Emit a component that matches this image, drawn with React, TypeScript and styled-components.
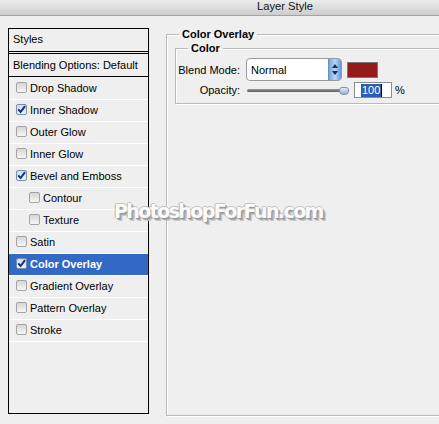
import React from 'react'
import styled, { createGlobalStyle } from 'styled-components'

const GlobalStyle = createGlobalStyle`
    html, body {
        margin: 0;
        padding: 0;
        background: #efefef;
    }
`

const Window = styled.div`
    position: relative;
    width: 439px;
    height: 424px;
    overflow: hidden;
    background: #efefef;
    font-family: 'Liberation Sans', Arial, sans-serif;
    font-size: 11px;
    color: #000;
`

const TitleBar = styled.div`
    height: 15px;
    border-bottom: 1px solid #a2a2a2;
    background: linear-gradient(#ececec, #cdcdcd);
    padding-left: 257px;
    font-size: 11.2px;
    line-height: 13px;
    color: #111;
`

const Body = styled.div`
    display: flex;
    padding: 12px 0 0 8px;
`

const StylesPanel = styled.div`
    flex-shrink: 0;
    width: 139px;
    height: 384px;
    border: 1px solid #000;
    display: flex;
    flex-direction: column;
    white-space: nowrap;
`

const PanelHeader = styled.div`
    height: 22px;
    line-height: 21px;
    padding-left: 4px;
    border-bottom: 3px double #000;
`

const BlendingRow = styled.div`
    height: 22px;
    line-height: 22px;
    padding-left: 4px;
    border-bottom: 1px solid #000;
`

const StyleRow = styled.div<{ $active?: boolean; $indent?: boolean; $first?: boolean }>`
    height: 21px;
    border-top: 1px solid ${(p) => (p.$first ? 'transparent' : '#fff')};
    display: flex;
    align-items: center;
    gap: 3px;
    padding-left: ${(p) => (p.$indent ? 20 : 7)}px;
    padding-bottom: 2px;
    box-sizing: border-box;
    height: 22px;
    background: ${(p) => (p.$active ? '#3169c4' : 'transparent')};
    color: ${(p) => (p.$active ? '#fff' : '#000')};
    font-weight: ${(p) => (p.$active ? 'bold' : 'normal')};
`

const Box = styled.span<{ $checked?: boolean }>`
    width: 9px;
    height: 9px;
    border: 1px solid ${(p) => (p.$checked ? '#7a8fb0' : '#a4a4a4')};
    border-radius: 2px;
    background: ${(p) =>
        p.$checked
            ? 'linear-gradient(#c9dcf4, #eef4fc)'
            : 'linear-gradient(#d6d6d6, #f6f6f6)'};
    display: flex;
    align-items: center;
    justify-content: center;
    flex-shrink: 0;
`

const Checkbox = ({ checked }: { checked?: boolean }) => (
    <Box $checked={checked}>
        {checked && (
            <svg width="9" height="9" viewBox="0 0 9 9">
                <path
                    d="M1.2 4.4 L3.6 7 L8 1.2"
                    fill="none"
                    stroke="#1a2f7a"
                    strokeWidth="2"
                />
            </svg>
        )}
    </Box>
)

const Settings = styled.div`
    margin-left: 17px;
`

const Group = styled.fieldset`
    box-sizing: border-box;
    margin: 0;
    padding: 0 0 0 8px;
    border: 1px solid #b9b9b9;
    box-shadow: inset 1px 1px 0 #fff, 1px 1px 0 #fff;
    width: 300px;
    height: 388px;
`

const InnerGroup = styled.fieldset`
    margin: 1px 0 0 0;
    padding: 3px 0 5px 0;
    border: 1px solid #b9b9b9;
    box-shadow: inset 1px 1px 0 #fff, 1px 1px 0 #fff;
    width: 300px;
    display: flex;
    flex-direction: column;
    gap: 1px;
`

const Legend = styled.legend<{ $offset: number }>`
    margin-left: ${(p) => p.$offset}px;
    padding: 0 3px;
    font-weight: bold;
    font-size: 11px;
    line-height: 13px;
`

const FieldRow = styled.div<{ $height: number }>`
    display: flex;
    align-items: center;
    height: ${(p) => p.$height}px;
`

const Label = styled.span`
    width: 64px;
    text-align: right;
    flex-shrink: 0;
`

const Select = styled.div`
    margin-left: 6px;
    width: 94px;
    height: 21px;
    border: 1px solid #9a9a9a;
    border-radius: 4px;
    background: #fff;
    display: flex;
    align-items: center;
    justify-content: space-between;
    overflow: hidden;
`

const SelectText = styled.span`
    padding-left: 4px;
    font-size: 11px;
`

const Spinner = styled.div`
    width: 12px;
    height: 100%;
    background: linear-gradient(90deg, #6ea6df, #b8d8f6 50%, #5f98d6);
    border-left: 1px solid #6a8fbf;
    display: flex;
    align-items: center;
    justify-content: center;
`

const Swatch = styled.div`
    width: 29px;
    height: 14px;
    border: 1px solid #7a7a7a;
    background: #951a1a;
    margin-left: 5px;
`

const Slider = styled.div`
    position: relative;
    width: 102px;
    height: 14px;
    display: flex;
    align-items: center;
    margin-left: 7px;
`

const Track = styled.div`
    width: 100%;
    height: 3px;
    border-radius: 2px;
    background: linear-gradient(#9a9a9a, #5c5c5c);
`

const Thumb = styled.div`
    position: absolute;
    right: 0;
    top: 4px;
    width: 8px;
    height: 6px;
    border-radius: 3px 3px 4px 4px;
    background: linear-gradient(#e0ecf8, #8fb0d4);
    border: 1px solid #7b93b0;
`

const NumberInput = styled.div`
    width: 30px;
    height: 14px;
    border: 1px solid #8c8c8c;
    background: #fff;
    display: flex;
    align-items: center;
    padding-left: 6px;
    margin-left: 5px;
`

const Selected = styled.span`
    background: #2f5db4;
    color: #fff;
    line-height: 13px;
    padding: 0 1px;
`

const Caret = styled.span`
    width: 1px;
    height: 13px;
    background: #000;
`

const Unit = styled.span`
    margin-left: 3px;
`

const Watermark = styled.div`
    position: absolute;
    left: 114px;
    top: 200px;
    font-family: 'DejaVu Sans', sans-serif;
    font-weight: bold;
    font-size: 19px;
    letter-spacing: -1.6px;
    color: #fafafa;
    text-shadow: -1px 0 #b8b8b8, 0 -1px #c4c4c4, 1px 1px #9a9a9a,
        2px 2px #a8a8a8, 3px 3px #c8c8c8;
`

const styleItems = [
    { label: 'Drop Shadow' },
    { label: 'Inner Shadow', checked: true },
    { label: 'Outer Glow' },
    { label: 'Inner Glow' },
    { label: 'Bevel and Emboss', checked: true },
    { label: 'Contour', indent: true },
    { label: 'Texture', indent: true },
    { label: 'Satin' },
    { label: 'Color Overlay', checked: true, active: true },
    { label: 'Gradient Overlay' },
    { label: 'Pattern Overlay' },
    { label: 'Stroke' },
]

const App = () => {
    return (
        <Window>
            <GlobalStyle />
            <TitleBar>Layer Style</TitleBar>
            <Body>
                <StylesPanel>
                    <PanelHeader>Styles</PanelHeader>
                    <BlendingRow>Blending Options: Default</BlendingRow>
                    {styleItems.map((item, i) => (
                        <StyleRow
                            key={item.label}
                            $first={i === 0}
                            $active={item.active}
                            $indent={item.indent}
                        >
                            <Checkbox checked={item.checked} />
                            {item.label}
                        </StyleRow>
                    ))}
                    <StyleRow />
                </StylesPanel>
                <Settings>
                    <Group>
                        <Legend $offset={4}>Color Overlay</Legend>
                        <InnerGroup>
                            <Legend $offset={12}>Color</Legend>
                            <FieldRow $height={23}>
                                <Label>Blend Mode:</Label>
                                <Select>
                                    <SelectText>Normal</SelectText>
                                    <Spinner>
                                        <svg width="6" height="11" viewBox="0 0 6 11">
                                            <path d="M3 0 L6 4 L0 4 Z M0 7 L6 7 L3 11 Z" fill="#1d2d4a" />
                                        </svg>
                                    </Spinner>
                                </Select>
                                <Swatch />
                            </FieldRow>
                            <FieldRow $height={16}>
                                <Label>Opacity:</Label>
                                <Slider>
                                    <Track />
                                    <Thumb />
                                </Slider>
                                <NumberInput>
                                    <Selected>100</Selected>
                                    <Caret />
                                </NumberInput>
                                <Unit>%</Unit>
                            </FieldRow>
                        </InnerGroup>
                    </Group>
                </Settings>
            </Body>
            <Watermark>PhotoshopForFun.com</Watermark>
        </Window>
    )
}

export default App
